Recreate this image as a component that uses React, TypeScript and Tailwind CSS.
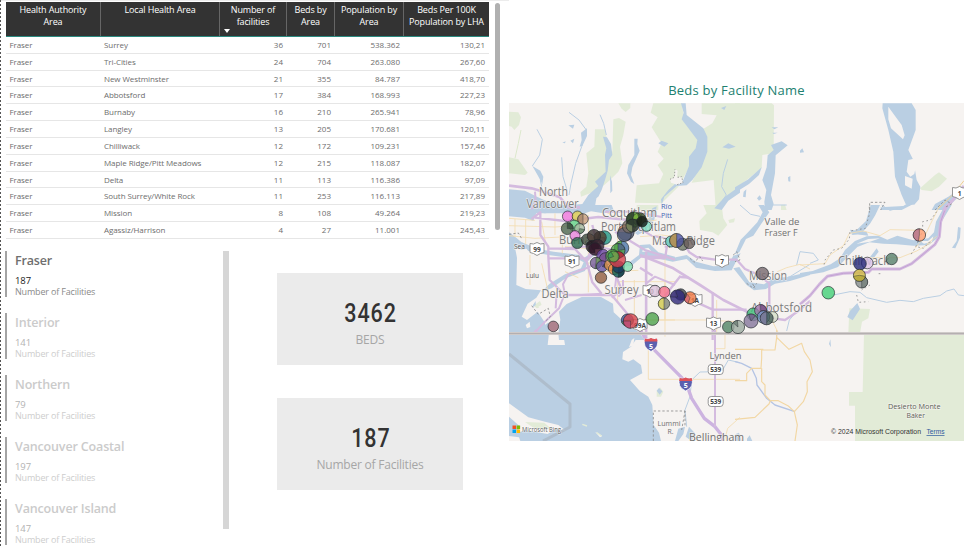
import React from "react";

const rows = [
  ["Surrey", "36", "701", "538.362", "130,21"],
  ["Tri-Cities", "24", "704", "263.080", "267,60"],
  ["New Westminster", "21", "355", "84.787", "418,70"],
  ["Abbotsford", "17", "384", "168.993", "227,23"],
  ["Burnaby", "16", "210", "265.941", "78,96"],
  ["Langley", "13", "205", "170.681", "120,11"],
  ["Chilliwack", "12", "172", "109.231", "157,46"],
  ["Maple Ridge/Pitt Meadows", "12", "215", "118.087", "182,07"],
  ["Delta", "11", "113", "116.386", "97,09"],
  ["South Surrey/White Rock", "11", "253", "116.113", "217,89"],
  ["Mission", "8", "108", "49.264", "219,23"],
  ["Agassiz/Harrison", "4", "27", "11.001", "245,43"],
];

const headers: [string, string][] = [
  ["Health Authority", "Area"],
  ["Local Health Area", ""],
  ["Number of", "facilities"],
  ["Beds by", "Area"],
  ["Population by", "Area"],
  ["Beds Per 100K", "Population by LHA"],
];

const regions = [
  ["Fraser", "187"],
  ["Interior", "141"],
  ["Northern", "79"],
  ["Vancouver Coastal", "197"],
  ["Vancouver Island", "147"],
];

const GRID = "grid grid-cols-[95px_119px_67px_48px_69px_85px]";

function FacilityTable() {
  return (
    <div className="w-[483px] text-[8px] text-[#6d6d6d]">
      <div className={`${GRID} h-[35px] border-b border-[#2b8a80] bg-[#333333] text-center text-[9px] font-medium leading-[12px] text-white`}>
        {headers.map(([a, b], i) => (
          <div key={i} className={`relative whitespace-nowrap pt-[2px] ${i < 5 ? "border-r border-[#666666]" : ""}`}>
            <div className="tracking-[-0.14px]">{a}</div>
            <div className="tracking-[-0.14px]">{b}</div>
            {i === 2 && (
              <span className="absolute bottom-[3px] left-[4px] border-x-[3px] border-t-[4px] border-x-transparent border-t-white" />
            )}
          </div>
        ))}
      </div>
      {rows.map((r) => (
        <div key={r[0]} className={`${GRID} h-[16.83px] items-center border-b border-[#e6e6e6] leading-[16px]`}>
          <div className="pl-[3.5px] tracking-[-0.08px]">Fraser</div>
          <div className="whitespace-nowrap pl-[3px] tracking-[-0.08px]">{r[0]}</div>
          <div className="pr-[4px] text-right">{r[1]}</div>
          <div className="pr-[4px] text-right">{r[2]}</div>
          <div className="pr-[4px] text-right">{r[3]}</div>
          <div className="pr-[4px] text-right">{r[4]}</div>
        </div>
      ))}
    </div>
  );
}

function RegionList() {
  return (
    <div className="flex w-[218px] flex-col gap-[16px]">
      {regions.map(([name, value], i) => (
        <div key={name} className="h-[46px] border-l-2 border-[#a3a3a3] pl-[8px]">
          <div className={`text-[12.5px] font-semibold leading-[19px] tracking-[-0.15px] ${i === 0 ? "text-[#6f6f6f]" : "text-[#cbcbcb]"}`}>{name}</div>
          <div className={`mt-[5px] text-[9.5px] leading-[11px] tracking-[-0.1px] ${i === 0 ? "text-[#222222]" : "text-[#b3b3b3]"}`}>{value}</div>
          <div className={`text-[9px] leading-[12px] tracking-[-0.17px] ${i === 0 ? "text-[#8a8a8a]" : "text-[#cdcdcd]"}`}>Number of Facilities</div>
        </div>
      ))}
    </div>
  );
}

function Card({ value, label }: { value: string; label: string }) {
  return (
    <div className="flex h-[92px] w-[186px] flex-col items-center bg-[#ebebeb] pt-[25px]">
      <div className="scale-x-[0.86] pl-[1px] font-[Roboto] text-[25px] font-medium leading-[32px] tracking-[1.1px] text-[#333333]">{value}</div>
      <div className="text-[12px] leading-[19px] tracking-[-0.22px] text-[#a6a6a6]">{label}</div>
    </div>
  );
}

/* x, y, radius, colour, optional slice colour, slice start and end in degrees */
type Pin = [number, number, number, string, string?, number?, number?];

const pins: Pin[] = [
  [567.7, 216.3, 5.3, "#f075dc"],
  [577.500, 216.3, 5.3, "#d9c94e"],
  [583, 219, 5.3, "#c9a07c", "#a98870", 180, 360],
  [574.3, 225.6, 5.5, "#62d287"],
  [567.3, 228.6, 6, "#4f6650", "#3b513e", 0, 90],
  [579.6, 228.6, 5, "#a7b9a0", "#698a6c", 100, 200],
  [575, 235.6, 5, "#e783dc"],
  [577.3, 243, 5.6, "#2c6b4d"],
  [604.6, 237.6, 6.8, "#219582", "#4c6ca0", 180, 270],
  [587, 239.6, 5.6, "#3e4a3c"],
  [600, 237.6, 6.3, "#55412f"],
  [594, 236, 6.6, "#3a3130", "#5b4b42", 180, 300],
  [592.3, 246.6, 6.3, "#221821"],
  [597.6, 245.6, 6.3, "#3a2632"],
  [595, 249, 6.3, "#2f1528", "#66384c", 90, 180],
  [603, 255.6, 6.3, "#6942a0"],
  [605.6, 259, 6.3, "#7a5190", "#ac8fc7", 0, 180],
  [596, 263, 5.7, "#775e96", "#6d9a5a", 0, 190],
  [602, 266.3, 5.6, "#6654a4", "#423b69", 50, 110],
  [610, 265, 5.6, "#e49a4d"],
  [614, 269, 5.6, "#e88b43"],
  [618.3, 271.3, 6, "#0e6558", "#163d4c", 0, 180],
  [618.6, 267, 6, "#183d61"],
  [627.6, 266.5, 5, "#81dfae"],
  [621.6, 248, 7.2, "#4a76aa", "#64b643", 180, 360],
  [618, 250.5, 7, "#54a14b", "#52638c", 0, 80],
  [612.5, 256, 6.6, "#52a541"],
  [617.6, 259.500, 8, "#d8404c", "#a8313a", 0, 60],
  [613.6, 256.5, 5.5, "#5cae4c", "#3c9b55", 250, 330],
  [601, 277.6, 5.7, "#915d40"],
  [626, 232.3, 8, "#e68250", "#4f698e", 60, 270],
  [624.3, 234.6, 7, "#535e7a"],
  [629, 226.5, 6.6, "#776b61"],
  [634, 219.5, 7.6, "#68bd37", "#26322a", 180, 360],
  [639.5, 219.3, 6.6, "#364c24", "#83c442", 270, 340],
  [632.5, 225.5, 6.4, "#303c32", "#7e8e61", 180, 290],
  [646.6, 226.4, 5, "#84e0c3"],
  [642, 221.6, 5.4, "#171b18"],
  [553.3, 326.4, 5.3, "#9d6776"],
  [627.3, 320, 6, "#3f5ba1", "#59a56b", 90, 250],
  [630.6, 321, 7.3, "#d94650", "#be4f7a", 180, 270],
  [652.3, 319, 6.4, "#4fa34c"],
  [655, 291, 5.7, "#dcc2d8"],
  [664.3, 292, 5.6, "#f4718b"],
  [664, 303.7, 5.7, "#7d8378", "#e8e064", 180, 360],
  [671, 241.5, 5.5, "#65cbbd"],
  [682.7, 244.3, 6, "#6b7464"],
  [676.7, 240.5, 7, "#4c52a3", "#c49e4a", 180, 360],
  [689.3, 243.3, 5.3, "#695e5d"],
  [762.4, 273.5, 6.2, "#77686e"],
  [690, 297.7, 6, "#ef7440", "#d66c75", 200, 320],
  [680.7, 294.5, 5.7, "#42454e"],
  [677.7, 297, 7.2, "#302779", "#4a4180", 270, 340],
  [772.6, 317, 5.4, "#d4dec8"],
  [753.3, 314.3, 6.4, "#3dbd77"],
  [760.6, 310.5, 6, "#a177ad", "#754e84", 0, 90],
  [763.4, 317, 6.3, "#6f91c2"],
  [766.7, 318.3, 6.5, "#435c57", "#8280a4", 180, 360],
  [751, 321, 7, "#86769c", "#70608a", 340, 400],
  [728.3, 327, 5.8, "#518465"],
  [738, 327, 6.6, "#9daba1", "#6d8075", 310, 355],
  [867.3, 263, 5.8, "#e0c6ea"],
  [860, 263.7, 6.3, "#252879"],
  [891.7, 259, 5.7, "#587f6c"],
  [919.4, 235, 6.2, "#ff9e70", "#b07590", 190, 360],
  [861.7, 282, 6, "#848c8d", "#75817c", 0, 180],
  [859.4, 275.3, 6, "#d2bb42", "#b7a93d", 100, 260],
  [828.3, 292.7, 6.3, "#43cf78"],
];

function point(x: number, y: number, r: number, deg: number) {
  const a = ((deg - 90) * Math.PI) / 180;
  return `${(x + r * Math.cos(a)).toFixed(2)} ${(y + r * Math.sin(a)).toFixed(2)}`;
}

function Pins() {
  return (
    <g stroke="#20262a" strokeWidth="0.8" strokeOpacity="0.8" fillOpacity="0.8">
      {pins.map(([x, y, r, fill, slice, from = 0, to = 0], i) => (
        <g key={i}>
          <circle cx={x} cy={y} r={r} fill={fill} />
          {slice && (
            <path
              d={`M${x} ${y}L${point(x, y, r, from)}A${r} ${r} 0 ${to - from > 180 ? 1 : 0} 1 ${point(x, y, r, to)}Z`}
              fill={slice}
              strokeWidth="0.5"
            />
          )}
        </g>
      ))}
    </g>
  );
}

function Shield({ x, y, label, w = 14 }: { x: number; y: number; label: string; w?: number }) {
  const h = w / 2;
  return (
    <g>
      <path
        d={`M${x - h} ${y - 5.5}q${h / 2} 1.5 ${h} -1q${h / 2} 2.5 ${h} 1v9q-${h / 2} .5 -${h} 3q-${h / 2} -2.500 -${h} -3z`}
        fill="#fff"
        stroke="#8a8a8a"
        strokeWidth="0.9"
      />
      <text x={x} y={y + 2.6} fontSize="6.5" fontWeight="700" fill="#444" textAnchor="middle">{label}</text>
    </g>
  );
}

function Interstate({ x, y }: { x: number; y: number }) {
  return (
    <g>
      <path d={`M${x - 6} ${y - 6}q3 1 6 -.5q3 1.500 6 .5q3 9 -6 13q-9 -4 -6 -13z`} fill="#5c5fae" stroke="#fff" strokeWidth="0.8" />
      <path d={`M${x - 6} ${y - 6}q3 1 6 -.5q3 1.500 6 .5l.6 3h-13.200z`} fill="#df5258" />
      <text x={x} y={y + 4} fontSize="7" fontWeight="700" fill="#fff" textAnchor="middle">5</text>
    </g>
  );
}

function RouteBox({ x, y }: { x: number; y: number }) {
  return (
    <g>
      <rect x={x - 7.5} y={y - 5} width="15" height="10" rx="3" fill="#fff" stroke="#8a8a8a" strokeWidth="0.9" />
      <text x={x} y={y + 2.5} fontSize="6.5" fontWeight="700" fill="#444" textAnchor="middle" textLength="11">539</text>
    </g>
  );
}

const NW = "translate(505 80) scale(0.33333)";
const NE = "translate(735 80) scale(0.33333)";
const W = "translate(505 205) scale(0.33333)";
const C = "translate(640 205) scale(0.33333)";
const E = "translate(800 205) scale(0.33333)";
const SW = "translate(505 330) scale(0.33333)";
const SE = "translate(735 330) scale(0.33333)";

function MapLabel({ x, y, size, w, children, color = "#7d7d7d" }: { x: number; y: number; size: number; w: number; children: string; color?: string }) {
  return (
    <text x={x} y={y} fontSize={size} textLength={w} lengthAdjust="spacingAndGlyphs" fill={color} stroke="#f7f4f2" strokeWidth="1.6" strokeOpacity="0.7" paintOrder="stroke">
      {children}
    </text>
  );
}

function BedsMap() {
  return (
    <svg width="455" height="338" viewBox="509 103 455 338" className="block" strokeLinejoin="round">
      <rect x="509" y="103" width="455" height="338" fill="#f6f3f1" />

      {/* parks */}
      <g fill="#e2ebd7">
        <g transform={NW}>
          <path d="M12 95L40 97L48 112L42 135L28 150L20 140L12 138zM12 232L40 238L52 255L68 278L60 285L12 280z" />
          <path d="M340 70H376V84L362 96L350 86z" />
          <path d="M270 148H300L310 200L322 215L325 118L342 114L362 125L355 165L345 200L352 250L340 275L315 300L280 330L228 350L226 336L244 320L250 280L244 220L268 200z" />
          <path d="M445 70L437 98L458 112L440 142L470 190L458 215L476 236L458 256L475 282L462 310L395 316L390 368L470 370L520 320L560 250L580 180L540 130L530 70z" />
          <path d="M590 70H705V330L632 382L626 300L560 308L605 215L590 150L622 130L635 106L590 102z" />
        </g>
        <g transform={NE}>
          <path d="M0 70H110L117 76L116 220L82 225L80 264L40 296L0 326z" />
          <path d="M555 325L600 285L612 277L636 296L612 320L590 334L560 330z" />
          <path d="M138 375L150 374L155 390H138z" />
        </g>
        <g transform={C}>
          <path d="M190 0H245L250 40L262 60L235 92L218 82L180 75L178 48L200 25z" />
          <path d="M265 45L285 40L282 52L268 54z" />
        </g>
        <g transform={W}>
          <path d="M395 0H460V14L425 22L395 12z" />
          <path d="M85 302L105 288L112 305L96 310zM360 70L382 66L384 84L364 86z" />
        </g>
        <g transform={E}>
          <path d="M148 310L210 312L205 340L186 350L180 385H145z" />
        </g>
        <g transform={SE}>
          <path d="M387 12H687V333H360V227H342V186H383zM342 0H375V10H342z" />
        </g>
        <g transform={SW}>
          <path d="M455 183L465 172L475 185L468 200L455 200z" />
        </g>
      </g>

      {/* water */}
      <g fill="#bacfe3">
        <g transform={NW}>
          <path d="M528 70H542L545 105L595 145L607 170V215L590 262L562 300L545 316L515 318L478 350L470 375L468 358L490 330L510 312L535 300L552 258V230L572 205L577 180L530 118L536 98z" />
          <path d="M294 170L306 172L318 192L322 225L312 240L308 272L300 300L290 330L280 350L265 360L268 390H212L232 372L250 345L280 318L270 305L302 275L300 225L304 205zM315 286L321 305L322 332L316 340z" />
          <path d="M388 176L398 176L397 192L404 212L382 262L378 285L388 312L378 305L366 280L370 255L388 225z" />
          <path d="M82 258L106 272L115 290L112 312L98 286zM228 158L246 145V168L232 198L224 200L230 180z" />
          <path d="M190 136L208 134L204 146zM172 188L182 184L180 190zM196 182L208 176L204 190zM460 190L470 182L490 190L478 200zM648 84L664 78L658 90zM652 202L670 190L692 200L672 206z" />
          <path d="M12 328L60 332L96 350L130 366L180 376L235 372L275 350L268 390L240 400H12z" />
          <path d="M628 385L660 350L705 318V338L670 362L650 390z" />
        </g>
        <g transform={NE}>
          <path d="M443 70H530L542 90V150L520 210L535 240L545 300L556 320L552 358L538 374L512 372L500 345L480 290L475 215L460 150L442 85z" />
          <path d="M108 195L140 184L158 196L122 226L120 280L108 345L116 372L110 390H90L88 365L94 330L82 300L95 262L98 226L116 210z" />
          <path d="M0 322L40 298L80 262L72 285L42 312L0 338zM195 212L202 205L207 217L195 218zM110 142H130L118 148zM112 158H128L116 162zM159 292L166 288V305L160 304zM26 335L34 328L32 352L24 350zM66 355L74 346L80 356L72 362z" />
          <path d="M437 382L505 378L520 368L535 372L500 390H437z" />
          <path d="M600 372L640 350L686 318V335L648 372L630 390H590z" />
        </g>
        <g transform={W}>
          <path d="M12 0H100L92 30L85 48L60 38L12 34zM98 0H268L320 0L328 20L295 25L240 16L170 18L120 25L98 22z" />
          <path d="M12 82L28 94L50 112L78 128L50 134L30 128L36 158L34 240L62 252L108 256L94 278L68 296L50 335L66 345L98 320L118 350L130 385L12 385z" />
          <path d="M112 385L118 362L130 352L135 385zM160 385L166 344L162 320L185 297L230 276L288 276L324 296L326 322L352 346L362 366L395 376L420 405H162z" />
          <path d="M50 112L100 132L146 140L224 150L246 172L240 198L182 220L140 250L108 262L134 236L180 208L228 190L236 172L218 162L130 150L70 138z" />
          <path d="M238 158L270 136L320 160L352 176L375 170L402 150L405 120L435 118L460 142L510 155V164L452 152L430 128L414 132L408 158L380 182L350 186L312 168L272 148L246 170z" />
          <path d="M412 62L430 42L442 10L455 4L448 45L420 78L398 90L390 84z" />
          <path d="M84 300L92 288L92 300L82 308z" />
        </g>
        <g transform={C}>
          <path d="M0 142L30 138L62 150L100 158L140 150L168 170L220 184L262 182L280 152L302 145L290 166L275 196L225 198L168 188L140 162L98 170L50 160L0 154z" />
          <path d="M355 0H372L388 22L365 55L340 92L318 102L298 142L284 148L302 104L322 84L352 52L368 22z" />
          <path d="M280 190L298 186L328 232L372 238L400 220L442 216L510 200V210L450 228L405 236L378 252L342 256L320 240z" />
        </g>
        <g transform={E}>
          <path d="M0 204L38 198L60 190L92 178L120 160L135 135L165 108L200 94L235 92L262 104L292 92L340 106L385 100L402 82L408 50L430 10L438 0H455L420 58L416 96L386 120L340 122L290 118L250 116L208 112L172 126L140 158L114 186L70 202L0 214z" />
          <path d="M212 0H240L226 30L210 56L182 88L154 90L198 48zM474 66L482 68L480 98L466 130L456 128L470 108zM150 74L200 80L205 92L155 86z" />
          <path d="M172 294L180 312L158 346L142 336L150 318zM196 175L230 130L236 140L205 180z" />
        </g>
        <g transform={SW}>
          <path d="M12 8H132L128 45L180 45L174 8H370L392 30L378 50L354 66L352 88L370 95L385 88L408 105L412 130L375 150L405 184L430 200L442 225L446 285L462 308L468 333H12z" />
          <path d="M455 182L462 174L472 184L464 194zM552 290L570 310L560 333L542 320zM520 296L540 290L535 312L520 333H510z" />
        </g>
        <g transform={SE}>
          <path d="M286 28L288 52L282 42zM0 333L2 312L12 308L20 333zM36 326L44 316L52 333H36z" />
        </g>
      </g>

      {/* islands */}
      <g fill="#f6f3f1">
        <g transform={NE}>
          <path d="M460 80L485 115L500 135L509 166L504 178L468 145L460 118zM536 236L545 248L538 282L526 290L515 275L520 240zM510 288L533 296L530 326L510 316z" />
        </g>
        <g transform={E}>
          <path d="M170 116L205 102L240 100L210 110zM360 108L384 108L400 94L396 110L372 116z" />
        </g>
        <g transform={W}>
          <path d="M62 360L74 350L76 366L66 370zM100 305L116 296L128 318L112 322z" />
        </g>
        <g transform={NW}>
          <path d="M495 298L508 292L510 268L518 272L516 292L530 290L534 308L516 314L498 308z" />
        </g>
        <g transform={SW}>
          <path d="M12 220L70 262L120 275L160 285L182 302L150 298L128 312L60 300L36 310L46 290L12 260zM12 318L42 322L46 333H12zM380 30L388 24L385 46L372 52zM270 305L292 318L285 322z" />
          <path d="M60 276L118 278L140 298L90 296z" fill="#e2ebd7" />
          <path d="M232 283L246 288M275 308L290 318" stroke="#e2ebd7" strokeWidth="4" />
        </g>
      </g>

      {/* streams */}
      <g fill="none" stroke="#bacfe3" strokeWidth="3">
        <g transform={NW}>
          <path d="M96 148L112 178L104 225L82 258M106 300L110 320M192 97L222 120L244 150L230 200L212 250L198 310L192 345M285 104L296 130L304 165M170 232L174 290L186 330M668 238L655 280L650 320L664 345L640 380" />
          <path d="M48 150L40 190L30 235" stroke="#dce8cc" />
        </g>
        <g transform={C}>
          <path d="M300 0L332 28L360 34M388 0L440 0M440 378L448 345L470 320M470 180L480 140M400 232L450 215L510 178" />
        </g>
        <g transform={E}>
          <path d="M100 270L150 260L180 262L200 278L260 292L300 286L340 290L370 280L420 272L440 258L462 252L475 270L492 272M0 140L40 145L55 165L30 175M245 0L270 16L330 0" />
        </g>
        <g transform={SW}>
          <path d="M705 98L670 90L650 125L585 126L560 150L555 200L540 240L545 290" />
        </g>
        <g transform={SE}>
          <path d="M0 95L20 100L50 115L64 145L66 165L95 205L120 225L180 245" stroke="#b4c4e4" strokeWidth="4" />
        </g>
      </g>

      {/* local roads */}
      <g fill="none" stroke="#f3dcb0" strokeWidth="2.5">
        <g transform={W}>
          <path d="M12 40L90 46M12 62L150 66L240 60M30 42V95M62 44V118M12 92L90 100L170 96M150 25V90M110 50L122 115M172 60V145M205 110L300 98M250 30V150M300 20L340 40L440 42M338 60V290M180 125L240 130L360 118M405 95L470 90L510 96M340 230H510M282 200L400 196M250 172V262M110 175L130 262M75 150V240M180 200L220 218M388 225V345M480 232V395M360 345H510" />
        </g>
        <g transform={C}>
          <path d="M75 160V345M0 345H195L290 350M20 50L50 45M230 285V384M398 350L415 384M410 384V405M412 200L440 188L480 178L510 192" />
        </g>
        <g transform={E}>
          <path d="M0 180L75 176L90 150L130 122L148 85L190 78L240 92L270 74L365 76M395 112L350 138L300 158L200 158M420 0L390 60L372 98L345 130M410 94L380 118" />
        </g>
        <g transform={SW}>
          <path d="M430 60V148H705M660 12V56L628 56M658 333L668 295L705 262" />
        </g>
        <g transform={SE} stroke="#f2d7a4" strokeWidth="3.5">
          <path d="M125 0V22L138 35L162 58L200 40L208 65L225 90L232 125L216 155L217 185L205 215L178 245M125 22L120 60H80V85L78 115H50L35 130V152H0M0 58H85M80 115V155L90 165V195L106 212L102 222L60 262L0 268M106 212L130 212L160 228L178 245L187 285L180 333" />
        </g>
      </g>

      {/* highways */}
      <g fill="none" stroke="#d4bbdf" strokeWidth="6">
        <g transform={NW}>
          <path d="M12 317L80 325L115 335L165 352L190 382L225 382" strokeWidth="8" />
          <path d="M90 335L92 365L80 388" />
        </g>
        <g transform={W}>
          <path d="M108 20L80 42M90 38L180 48L280 36L370 45M106 20V90L130 125V155L134 225L180 270H290L320 270L362 320L392 365L425 400M130 160H250L290 120M130 130L210 132L245 170L272 100L262 60M245 170L262 232L290 266M295 180L325 192L350 255L320 278M330 80L420 135L510 164" strokeWidth="7" />
          <path d="M178 270L162 310L120 350L92 380M180 268L174 238L190 208L238 192L300 165M424 140V405M424 235L450 215L510 240M180 130L270 122L345 140M300 20L390 20L470 36M382 58L440 92L482 100L482 128M340 160L330 250M155 262L152 310M290 266L230 270M354 225V260L340 275M410 270L360 285M480 150V160H424" />
        </g>
        <g transform={C}>
          <path d="M0 150L100 190L180 240L250 285L320 320L345 340" strokeWidth="8" />
          <path d="M130 112L148 142L170 156L225 164H290L315 192L352 208L388 235V320L400 340L435 345L470 322L510 288M18 140V395M82 116L76 155H0M0 188L38 212M122 216L145 218M122 212L75 272M85 270L170 292L218 314H320M218 262V405" strokeWidth="7" />
        </g>
        <g transform={E}>
          <path d="M0 298L30 272L58 238L82 214L130 205L205 202L215 192H300L335 176L405 118L418 95L422 50L440 0" strokeWidth="9" />
          <path d="M0 298L30 272L58 238L82 214L130 205L205 202L215 192H300L335 176L405 118L418 95L422 50L440 0" stroke="#c3a2d4" strokeWidth="3" />
        </g>
        <g transform={NE}>
          <path d="M625 390L652 362L687 318" strokeWidth="9" />
          <path d="M610 386L650 348L687 302" stroke="#f0cf92" strokeWidth="3" />
        </g>
        <g transform={SW}>
          <path d="M405 0L438 50L542 155L560 205L598 265L630 290L652 318V333" stroke="#ccb3e0" strokeWidth="10" />
          <path d="M630 0V290" />
          <path d="M95 0L88 10" strokeWidth="9" />
        </g>
      </g>

      {/* dashed boundaries */}
      <g fill="none" stroke="#8c8c8c" strokeWidth="2.5" strokeDasharray="7 6">
        <g transform={SW}>
          <path d="M445 333V243H540V290M540 243L530 300" />
        </g>
        <g transform={NE}>
          <path d="M404 390V367H450L437 390M600 390L630 360L650 372L630 382" />
        </g>
        <g transform={NW}>
          <path d="M495 298L508 292L510 268M518 292L530 290L534 308L516 314" strokeDasharray="4 5" />
        </g>
        <g transform={W}>
          <path d="M80 302L100 328L130 310L136 335L120 350M12 88L40 84L52 104" />
        </g>
        <g transform={C}>
          <path d="M280 150L290 140L300 165L285 170M150 160L162 172L180 155L188 168M320 235L340 250L350 235M332 225L345 250" />
        </g>
        <g transform={E}>
          <path d="M208 5V28L196 70L150 78L148 102L125 130L100 135L75 165L72 180M410 20L392 45L368 50V78L345 130L332 150M170 270L175 292L205 290M210 240L185 255M236 206H246M390 110L370 130L350 125" strokeDasharray="5 8" />
        </g>
      </g>

      {/* international border */}
      <path d="M509 333.5H964" stroke="#cfcac9" strokeWidth="3" />
      <path d="M509 333.5H964" stroke="#b4afb0" strokeWidth="1" />
      <path d="M509 354L570 404V427L543 441" fill="none" stroke="#abb8c6" strokeWidth="3" strokeOpacity="0.8" />

      <g fontFamily="'Open Sans', 'Noto Sans', sans-serif">
        <Shield x={537} y={249} label="99" />
        <Shield x={572} y={261.5} label="91" />
        <Shield x={650} y={291} label="10" />
        <Shield x={722} y={261} label="7" w={13} />
        <Shield x={713.5} y={323.5} label="13" />
        <Shield x={640} y={325} label="99A" />
        <Shield x={695} y={300} label="1A" />
        <Shield x={959.5} y={193} label="1" w={14} />
        <Interstate x={651} y={344.5} />
        <Interstate x={685.7} y={384} />
        <RouteBox x={715.7} y={369.5} />
        <RouteBox x={715.7} y={401.5} />

        <MapLabel x={539} y={196} size={12} w={29}>North</MapLabel>
        <MapLabel x={526.5} y={207.5} size={12} w={52}>Vancouver</MapLabel>
        <MapLabel x={602} y={217} size={12} w={55}>Coquitlam</MapLabel>
        <MapLabel x={601} y={231} size={12} w={75}>Port Coquitlam</MapLabel>
        <MapLabel x={559} y={243.5} size={12} w={44}>Burnaby</MapLabel>
        <MapLabel x={652} y={245} size={12} w={63}>Maple Ridge</MapLabel>
        <MapLabel x={604.5} y={293.5} size={12} w={34}>Surrey</MapLabel>
        <MapLabel x={541.5} y={298} size={12} w={27}>Delta</MapLabel>
        <MapLabel x={749} y={280} size={12} w={38}>Mission</MapLabel>
        <MapLabel x={751} y={311.5} size={12} w={61}>Abbotsford</MapLabel>
        <MapLabel x={838} y={265} size={12} w={51}>Chilliwack</MapLabel>
        <MapLabel x={764.5} y={225} size={9.5} w={35} color="#707070">Valle de</MapLabel>
        <MapLabel x={764.5} y={235.5} size={9.5} w={33} color="#707070">Fraser F</MapLabel>
        <MapLabel x={709.5} y={359} size={9.5} w={32} color="#707070">Lynden</MapLabel>
        <MapLabel x={689} y={441} size={11} w={55} color="#707070">Bellingham</MapLabel>
        <MapLabel x={514} y={248.5} size={7} w={11} color="#555">Sea</MapLabel>
        <MapLabel x={526} y={278} size={7} w={13} color="#555">Lulu</MapLabel>
        <MapLabel x={657.5} y={426} size={7.5} w={23} color="#707070">Lummi</MapLabel>
        <MapLabel x={667.5} y={433.5} size={7.5} w={6} color="#707070">R.</MapLabel>
        <MapLabel x={661} y={209} size={7.5} w={11} color="#4464b4">Río</MapLabel>
        <MapLabel x={661} y={217.5} size={7.5} w={11} color="#4464b4">Pitt</MapLabel>
        <MapLabel x={888} y={409} size={7.5} w={52.5} color="#5b6256">Desierto Monte</MapLabel>
        <MapLabel x={906.5} y={417.5} size={7.5} w={18.5} color="#5b6256">Baker</MapLabel>
      </g>

      <Pins />

      <g>
        <rect x="512.5" y="425.5" width="3.5" height="3.5" fill="#f25022" />
        <rect x="516.6" y="425.5" width="3.5" height="3.5" fill="#7fba00" />
        <rect x="512.5" y="429.5" width="3.5" height="3.5" fill="#00a4ef" />
        <rect x="516.6" y="429.5" width="3.5" height="3.5" fill="#ffb900" />
        <text x="522" y="432" fontFamily="'Open Sans', sans-serif" fontSize="6.5" fill="#5c5c5c" stroke="#fff" strokeWidth="1.2" strokeOpacity="0.6" paintOrder="stroke" textLength="39" lengthAdjust="spacingAndGlyphs">Microsoft Bing</text>
        <g fontFamily="'Liberation Sans', Arial, sans-serif" fontSize="7">
          <text x="831" y="434" fill="#333" textLength="90" lengthAdjust="spacingAndGlyphs">© 2024 Microsoft Corporation</text>
          <text x="926.5" y="434" fill="#2d5b9e" textLength="18" lengthAdjust="spacingAndGlyphs" textDecoration="underline">Terms</text>
        </g>
      </g>
    </svg>
  );
}

export default function App() {
  return (
    <div className="flex h-[548px] w-[977px] overflow-hidden bg-white font-['Open_Sans','Noto_Sans',sans-serif]">
      <div className="h-full w-px shrink-0 bg-[repeating-linear-gradient(to_bottom,#555_0_2px,#fff_2px_4px)]" />
      <div className="flex w-[508px] shrink-0 flex-col border-t border-[#ececec]">
        <div className="flex h-[250px] items-start gap-[6px] pl-[5px] pt-px">
          <FacilityTable />
          <div className="mt-px h-[227px] w-[5px] rounded-full bg-[#b0b0b0]" />
        </div>
        <div className="flex items-start pl-[4px]">
          <RegionList />
          <div className="h-[278px] w-[6px] shrink-0 bg-[#d6d6d6]" />
          <div className="ml-[48px] mt-[22px] flex flex-col gap-[33px]">
            <Card value="3462" label="BEDS" />
            <Card value="187" label="Number of Facilities" />
          </div>
        </div>
      </div>
      <div className="flex w-[455px] shrink-0 flex-col pt-[80px]">
        <h2 className="h-[23px] text-center text-[13px] leading-[20px] tracking-[0.22px] text-[#218070]">Beds by Facility Name</h2>
        <BedsMap />
      </div>
    </div>
  );
}
